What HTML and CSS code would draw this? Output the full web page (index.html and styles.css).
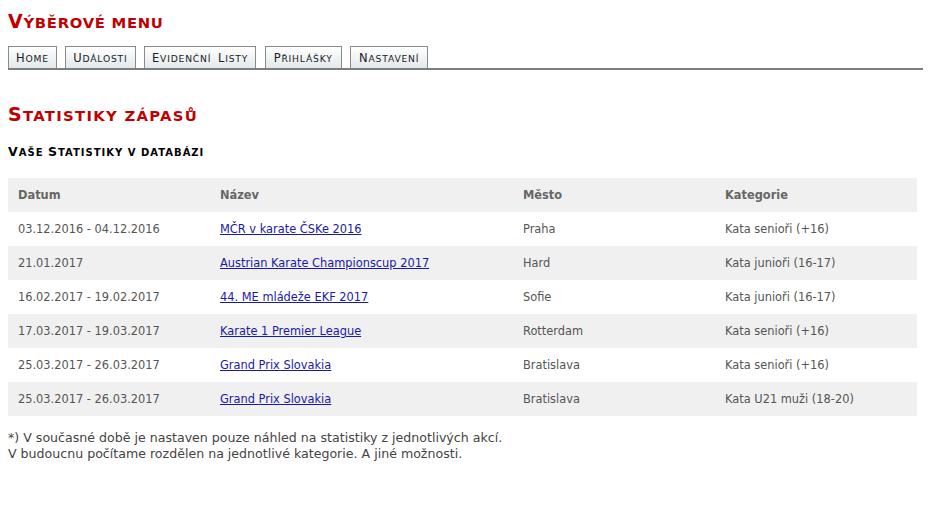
FILE: index.html
```html
<!DOCTYPE html>
<html lang="cs">
<head>
<meta charset="utf-8">
<title>Statistiky zápasů</title>
<link rel="stylesheet" href="styles.css">
</head>
<body>
<h1 class="title">V<span class="lc">ýběrové menu</span></h1>
<nav class="tabs">
  <a class="tab" href="#">H<span class="lc">ome</span></a>
  <a class="tab" href="#">U<span class="lc">dálosti</span></a>
  <a class="tab" href="#">E<span class="lc">videnční </span>L<span class="lc">isty</span></a>
  <a class="tab" href="#">P<span class="lc">řihlášky</span></a>
  <a class="tab" href="#">N<span class="lc">astavení</span></a>
</nav>
<h1 class="title section">S<span class="lc">tatistiky zápasů</span></h1>
<h2 class="subtitle">V<span class="lc">aše </span>S<span class="lc">tatistiky v databázi</span></h2>
<table class="stats">
  <thead>
    <tr><th class="c2">Datum</th><th class="c3">Název</th><th class="c2">Město</th><th class="c2">Kategorie</th></tr>
  </thead>
  <tbody>
    <tr><td>03.12.2016 - 04.12.2016</td><td><a href="#">MČR v karate ČSKe 2016</a></td><td>Praha</td><td>Kata senioři (+16)</td></tr>
    <tr><td>21.01.2017</td><td><a href="#">Austrian Karate Championscup 2017</a></td><td>Hard</td><td>Kata junioři (16-17)</td></tr>
    <tr><td>16.02.2017 - 19.02.2017</td><td><a href="#">44. ME mládeže EKF 2017</a></td><td>Sofie</td><td>Kata junioři (16-17)</td></tr>
    <tr><td>17.03.2017 - 19.03.2017</td><td><a href="#">Karate 1 Premier League</a></td><td>Rotterdam</td><td>Kata senioři (+16)</td></tr>
    <tr><td>25.03.2017 - 26.03.2017</td><td><a href="#">Grand Prix Slovakia</a></td><td>Bratislava</td><td>Kata senioři (+16)</td></tr>
    <tr><td>25.03.2017 - 26.03.2017</td><td><a href="#">Grand Prix Slovakia</a></td><td>Bratislava</td><td>Kata U21 muži (18-20)</td></tr>
  </tbody>
</table>
<p class="note">*) V současné době je nastaven pouze náhled na statistiky z jednotlivých akcí.<br>V budoucnu počítame rozdělen na jednotlivé kategorie. A jiné možnosti.</p>
</body>
</html>
```

FILE: styles.css
```css
body {
  margin: 8px;
  font-family: "DejaVu Sans", Verdana, sans-serif;
  font-size: 12px;
  color: #444;
  background: #fff;
}
.lc {
  text-transform: uppercase;
  font-size: 0.76em;
}
.title {
  margin: 1px 0 0 0;
  font-size: 19px;
  line-height: 24px;
  font-weight: bold;
  letter-spacing: 0.7px;
  color: #c00000;
}
.title .lc {
  font-size: 0.78em;
}
.title.section {
  margin-top: 32px;
  letter-spacing: 1.3px;
}
.tabs {
  display: flex;
  gap: 8.5px;
  margin-top: 11px;
  border-bottom: 2px solid #7d7d7d;
}
.tab {
  display: block;
  padding: 3px 7px 1px 7px;
  line-height: 17px;
  font-size: 11.5px;
  letter-spacing: 0.8px;
  word-spacing: 3px;
  color: #222;
  text-decoration: none;
  border: 1px solid #8a8a8a;
  border-bottom: none;
  background: linear-gradient(#ffffff, #e2e9ec);
}
.tab .lc {
  font-size: 0.8em;
}
.tab + .tab + .tab + .tab {
  padding: 3px 8px 1px 8px;
}
.subtitle {
  margin: 15px 0 0 0;
  font-size: 12.5px;
  line-height: 18px;
  font-weight: bold;
  letter-spacing: 1px;
  color: #000;
}
.subtitle .lc {
  font-size: 0.8em;
}
.stats {
  margin-top: 16px;
  width: 909px;
  border-collapse: collapse;
  table-layout: fixed;
  font-size: 11.4px;
}
.stats th,
.stats td {
  box-sizing: border-box;
  height: 34px;
  padding: 0 10px;
  text-align: left;
}
.stats .c2 { width: 202px; }
.stats .c3 { width: 303px; }
.stats th {
  font-weight: bold;
  color: #666;
  background: #f0f0f0;
}
.stats td {
  color: #555;
}
.stats tbody tr:nth-child(even) td {
  background: #f0f0f0;
}
.stats a {
  color: #1a1aa6;
}
.note {
  margin: 14px 0 0 0;
  font-size: 12.6px;
  line-height: 16px;
  color: #444;
}
```
